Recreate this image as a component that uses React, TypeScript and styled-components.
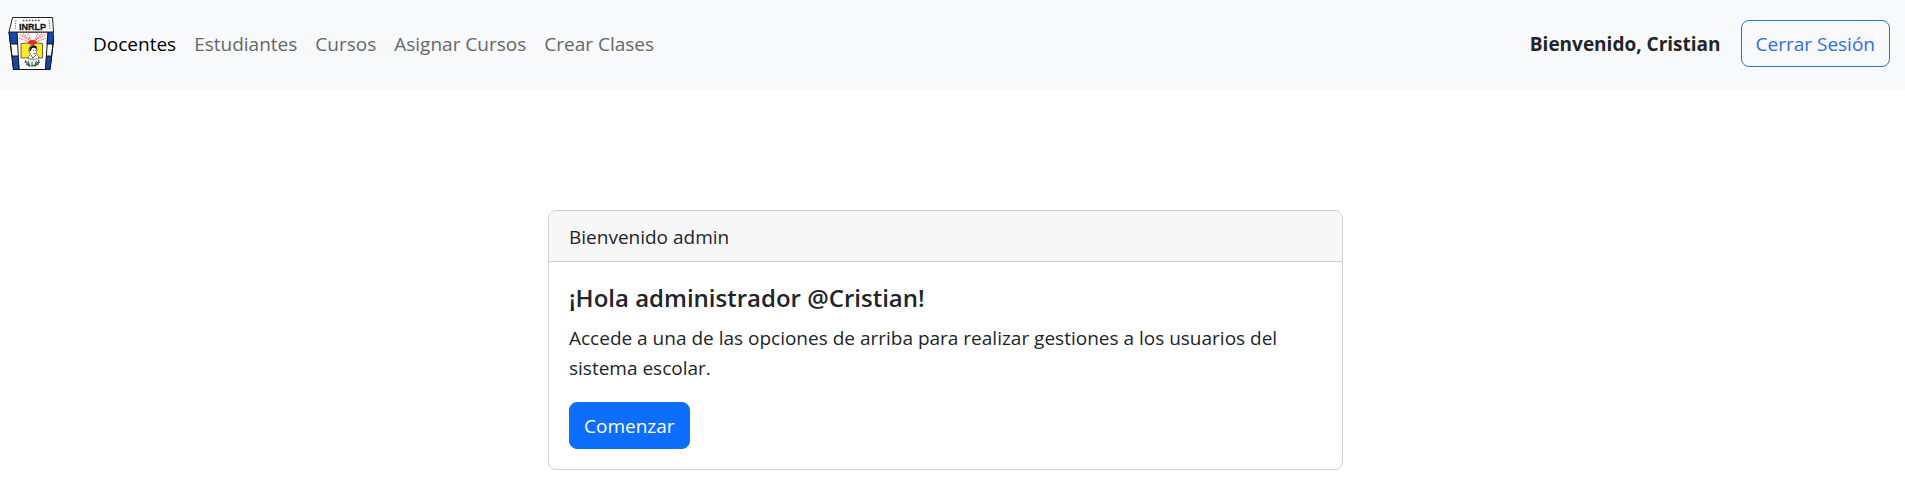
import React from "react";
import styled, { createGlobalStyle } from "styled-components";

const GlobalStyle = createGlobalStyle`
  *, *::before, *::after { box-sizing: border-box; }
  body {
    margin: 0;
    background: #fff;
    color: #212529;
    font-family: "Segoe UI", "Open Sans", "Noto Sans", sans-serif;
    font-size: 19px;
    line-height: 30px;
  }
`;

const Navbar = styled.nav`
  display: flex;
  flex-wrap: wrap;
  align-items: center;
  min-height: 90px;
  padding: 8px 15px 12px 6px;
  background: #f8f9fa;
`;

const Brand = styled.a`
  display: flex;
  margin-right: 30px;
`;

const NavList = styled.ul`
  display: flex;
  flex-wrap: wrap;
  flex: 1;
  margin: 0;
  padding: 0;
  list-style: none;
`;

const NavLink = styled.a<{ $active?: boolean }>`
  display: block;
  padding: 11px 9px 9px;
  color: ${(p) => (p.$active ? "#000" : "#65676a")};
  text-decoration: none;
`;

const Session = styled.div`
  display: flex;
  align-items: center;
  gap: 20px;
`;

const Greeting = styled.strong`
  padding-top: 2px;
  font-weight: 700;
`;

const Button = styled.button<{ $outline?: boolean }>`
  padding: 9px 14px 7px;
  border: 1px solid ${(p) => (p.$outline ? "#2a72d8" : "#0d6efd")};
  border-radius: 8px;
  background: ${(p) => (p.$outline ? "transparent" : "#0d6efd")};
  color: ${(p) => (p.$outline ? "#2f6bea" : "#fff")};
  font: inherit;
  line-height: 29px;
  cursor: pointer;
`;

const Main = styled.main`
  display: flex;
  justify-content: center;
  padding: 120px 14px 0 0;
`;

const Card = styled.section`
  width: 100%;
  max-width: 795px;
  border: 1px solid #d0d1d2;
  border-radius: 8px;
  overflow: hidden;
`;

const CardHeader = styled.header`
  padding: 11px 20px 9px;
  border-bottom: 1px solid #d0d1d2;
  background: #f7f7f7;
`;

const CardBody = styled.div`
  padding: 21px 20px 20px;
`;

const CardTitle = styled.h5`
  margin: 0 0 10px;
  font-size: 24px;
  font-weight: 600;
  line-height: 30px;
`;

const CardText = styled.p`
  margin: 0 0 19px;
`;

const Logo = () => (
  <svg width="48" height="56" viewBox="6 15 48 56" role="img" aria-label="INRLP">
    <path d="M9 32h45.500L50 69.500H13.500Z" fill="#fff" stroke="#111" strokeWidth="1" />
    <path d="M9 32h8l1 12h-7.500Z M12 56h6.500l1 13h-6Z M54.500 32h-7l-1 12h6.500Z M52 56h-6l-1 13h5Z" fill="#1746b4" />
    <path d="M17 32l2 37M48 32l-2.500 37M10.500 44H18M12 56h6.500M53 44H47M52 56h-6M9 32l4.500 37.500H50L54.500 32" fill="none" stroke="#111" strokeWidth="1" />
    <path d="M12.500 17.500H52.500L53.500 32H9Z" fill="#fff" stroke="#222" strokeWidth="1" />
    <path d="M16 20l-1 10M49 20l1 10" stroke="#777" strokeWidth="1" strokeDasharray="1.500 1" />
    <path d="M23 20.500h18" stroke="#444" strokeWidth="1.500" strokeDasharray="1.500 1.500" />
    <text x="32.500" y="30" textAnchor="middle" fontFamily="'Liberation Sans Narrow', 'Liberation Sans', sans-serif" fontWeight="700" fontSize="9" fill="#111" stroke="#111" strokeWidth=".3">INRLP</text>
    <path d="M31 41L19 34M31 41L23 33.500M31 41L28 33.500M34 41L46 34M34 41L42 33.500M34 41L38 33.500M29 42L19 38M36 42L46 38" stroke="#e27a75" strokeWidth="1.200" strokeDasharray="1.500 .8" />
    <path d="M21 43.500q6-1.500 11.500 1q5-2.500 10-1V58q-5-1-10 1q-6-2-11.500-1Z" fill="#ffe82a" stroke="#4a4210" strokeWidth=".8" />
    <path d="M28 43a4.500 3 0 0 1 9 0l-4.500 2Z" fill="#e52b20" />
    <path d="M28 59q0-3 2.500-4.500L29 51q-1-5 4-5.500q4 0 4 4l-1 4.500q3 1.500 3 5Z" fill="#fff" stroke="#333" strokeWidth=".6" />
    <path d="M29.500 51q-1-5 4-5.500q4 0 3.500 4q-2-2.500-5-1.500l-1 3Z" fill="#161616" />
    <path d="M33 50.500h1M35.500 50.500h1M33.500 53.500h2M31 55l2 3 3-3" fill="none" stroke="#333" strokeWidth=".8" />
    <path d="M25.500 60q1 5.500 7 5.500q5 0 6.500-5.500M26 64l4 2.500M39 63.500l-5 3M28 61l1.500 4M36.500 61l-1.500 4M32 62v5M24.500 62l3 1M40 62l-3 1" fill="none" stroke="#3c6c4c" strokeWidth="1.200" />
  </svg>
);

const links = ["Docentes", "Estudiantes", "Cursos", "Asignar Cursos", "Crear Clases"];

export default function App() {
  return (
    <>
      <GlobalStyle />
      <Navbar>
        <Brand href="#">
          <Logo />
        </Brand>
        <NavList>
          {links.map((label, i) => (
            <li key={label}>
              <NavLink href="#" $active={i === 0}>{label}</NavLink>
            </li>
          ))}
        </NavList>
        <Session>
          <Greeting>Bienvenido, Cristian</Greeting>
          <Button type="button" $outline>Cerrar Sesión</Button>
        </Session>
      </Navbar>
      <Main>
        <Card>
          <CardHeader>Bienvenido admin</CardHeader>
          <CardBody>
            <CardTitle>¡Hola administrador @Cristian!</CardTitle>
            <CardText>
              Accede a una de las opciones de arriba para realizar gestiones a los usuarios del sistema escolar.
            </CardText>
            <Button type="button">Comenzar</Button>
          </CardBody>
        </Card>
      </Main>
    </>
  );
}
